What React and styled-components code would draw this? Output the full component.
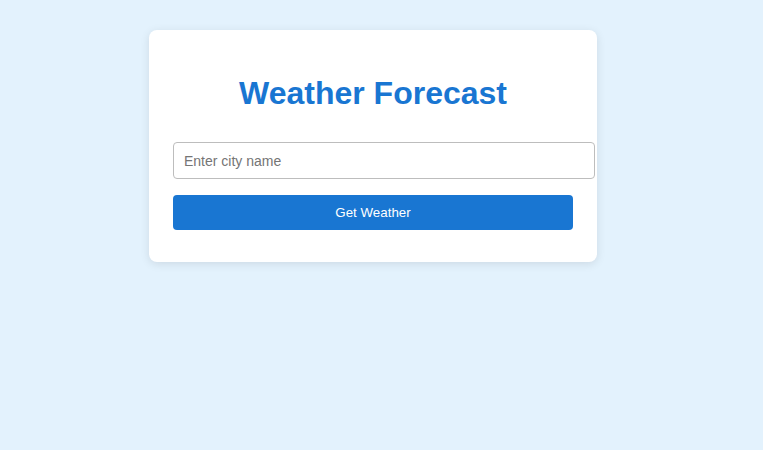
import React from "react";
import styled, { createGlobalStyle } from "styled-components";

const Global = createGlobalStyle`
  html, body { margin: 0; padding: 0; background: #e3f2fd; }
  body { font-family: "Liberation Sans", Arial, sans-serif; }
  #root { min-height: 100vh; }
`;

const Page = styled.div`
  display: flex;
  align-items: flex-start;
  padding: 30px 0 0 149px;
  min-height: 450px;
  box-sizing: border-box;
`;

const Card = styled.div`
  width: 448px;
  box-sizing: border-box;
  background: #ffffff;
  border-radius: 8px;
  padding: 24px 24px 32px;
  box-shadow: 0 2px 10px rgba(0, 0, 0, 0.1);
  display: flex;
  flex-direction: column;
  align-items: flex-start;
`;

const Title = styled.h1`
  align-self: stretch;
  margin: 21px 0 31px;
  text-align: center;
  font-size: 32px;
  font-weight: 700;
  color: #1976d2;
  line-height: 36px;
`;

const Input = styled.input`
  width: 422px;
  box-sizing: border-box;
  height: 37px;
  padding: 0 10px;
  border: 1px solid #bdbdbd;
  border-radius: 4px;
  font-family: "Liberation Sans", Arial, sans-serif;
  font-size: 14px;
  color: #333;
  outline: none;
  margin-bottom: 16px;
  &::placeholder { color: #757575; }
`;

const Button = styled.button`
  width: 400px;
  height: 35px;
  border: none;
  border-radius: 4px;
  background: #1976d2;
  color: #ffffff;
  font-family: "Liberation Sans", Arial, sans-serif;
  font-size: 13.33px;
  cursor: pointer;
`;

export default function App() {
  return (
    <>
      <Global />
      <Page>
        <Card>
          <Title>Weather Forecast</Title>
          <Input placeholder="Enter city name" />
          <Button>Get Weather</Button>
        </Card>
      </Page>
    </>
  );
}
